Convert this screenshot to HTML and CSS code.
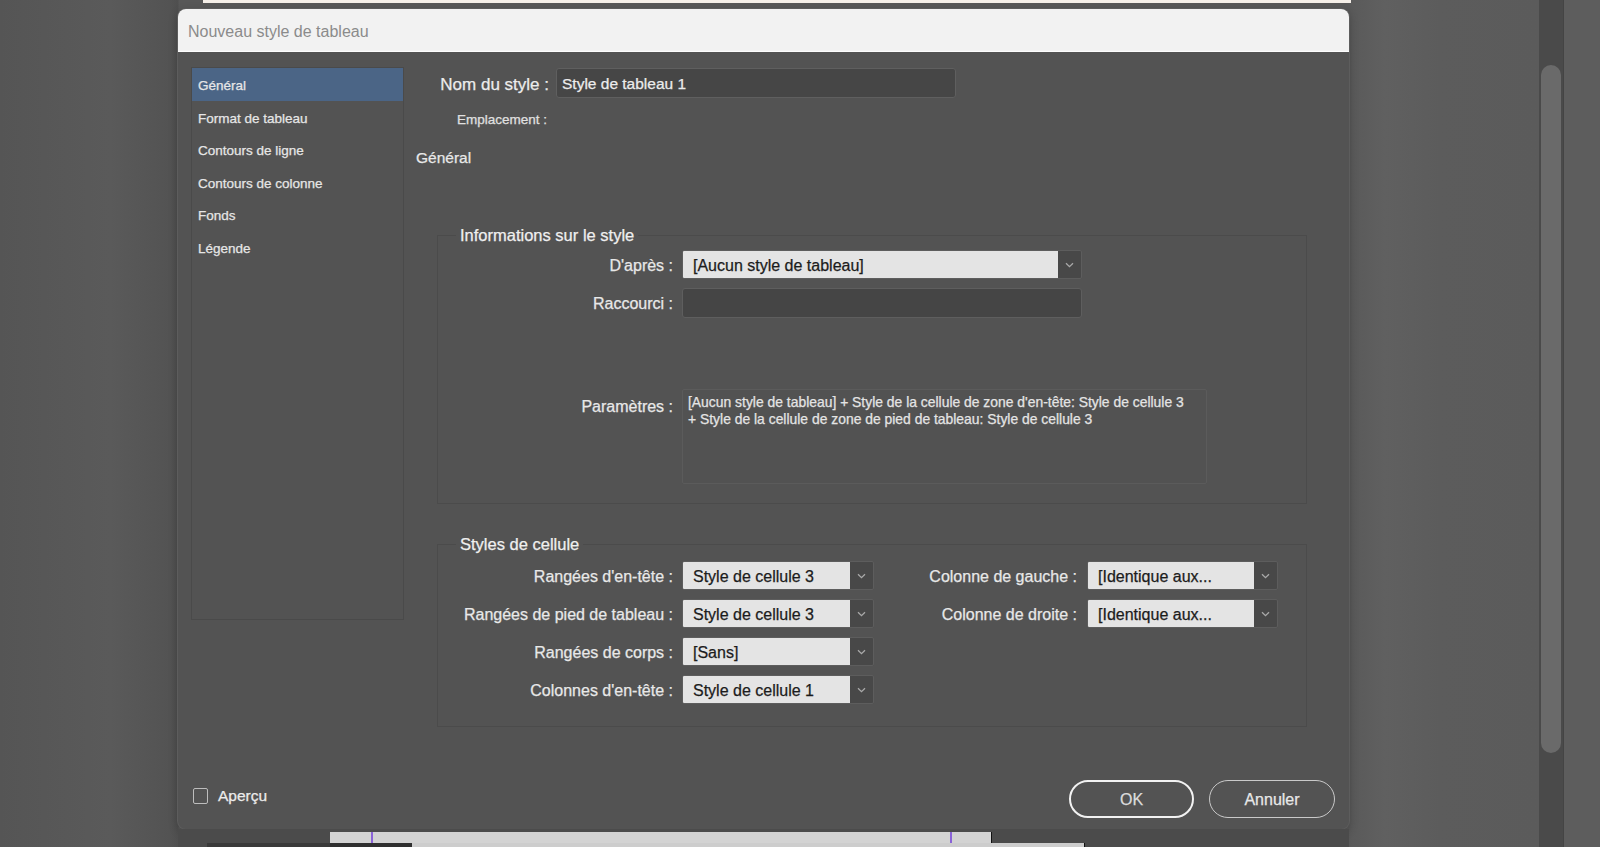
FILE: index.html
```html
<!DOCTYPE html>
<html lang="fr">
<head>
<meta charset="utf-8">
<title>Nouveau style de tableau</title>
<link rel="stylesheet" href="styles.css">
</head>
<body>
<div class="stage">
  <div class="topstrip"><div class="topbar"></div></div>

  <div class="dialog">
    <div class="titlebar">Nouveau style de tableau</div>
    <div class="dbody">
      <div class="content">
        <ul class="sidebar">
          <li class="active">Général</li>
          <li>Format de tableau</li>
          <li>Contours de ligne</li>
          <li>Contours de colonne</li>
          <li>Fonds</li>
          <li>Légende</li>
        </ul>

        <div class="main">
          <div class="namerow">
            <label>Nom du style :</label>
            <div class="text-input">Style de tableau 1</div>
          </div>
          <div class="emplacement">Emplacement :</div>
          <div class="section-title">Général</div>

          <fieldset class="group g1">
            <legend>Informations sur le style</legend>
            <div class="form-row r1">
              <label>D'après :</label>
              <div class="select wide">
                <div class="val">[Aucun style de tableau]</div>
                <div class="arrow"><svg width="9" height="6" viewBox="0 0 9 6"><path d="M1 1.2l3.5 3.5 3.5-3.5" fill="none" stroke="#a9a9a9" stroke-width="1.3"/></svg></div>
              </div>
            </div>
            <div class="form-row r2">
              <label>Raccourci :</label>
              <div class="field"></div>
            </div>
            <div class="form-row r3">
              <label>Paramètres :</label>
              <div class="params">[Aucun style de tableau] + Style de la cellule de zone d'en-tête: Style de cellule 3<br>+ Style de la cellule de zone de pied de tableau: Style de cellule 3</div>
            </div>
          </fieldset>

          <fieldset class="group g2">
            <legend>Styles de cellule</legend>
            <div class="cells">
              <label class="l1">Rangées d'en-tête :</label>
              <div class="select"><div class="val">Style de cellule 3</div><div class="arrow"><svg width="9" height="6" viewBox="0 0 9 6"><path d="M1 1.2l3.5 3.5 3.5-3.5" fill="none" stroke="#a9a9a9" stroke-width="1.3"/></svg></div></div>
              <label class="l2">Colonne de gauche :</label>
              <div class="select"><div class="val">[Identique aux...</div><div class="arrow"><svg width="9" height="6" viewBox="0 0 9 6"><path d="M1 1.2l3.5 3.5 3.5-3.5" fill="none" stroke="#a9a9a9" stroke-width="1.3"/></svg></div></div>

              <label class="l1">Rangées de pied de tableau :</label>
              <div class="select"><div class="val">Style de cellule 3</div><div class="arrow"><svg width="9" height="6" viewBox="0 0 9 6"><path d="M1 1.2l3.5 3.5 3.5-3.5" fill="none" stroke="#a9a9a9" stroke-width="1.3"/></svg></div></div>
              <label class="l2">Colonne de droite :</label>
              <div class="select"><div class="val">[Identique aux...</div><div class="arrow"><svg width="9" height="6" viewBox="0 0 9 6"><path d="M1 1.2l3.5 3.5 3.5-3.5" fill="none" stroke="#a9a9a9" stroke-width="1.3"/></svg></div></div>

              <label class="l1">Rangées de corps :</label>
              <div class="select"><div class="val">[Sans]</div><div class="arrow"><svg width="9" height="6" viewBox="0 0 9 6"><path d="M1 1.2l3.5 3.5 3.5-3.5" fill="none" stroke="#a9a9a9" stroke-width="1.3"/></svg></div></div>
              <span></span><span></span>

              <label class="l1">Colonnes d'en-tête :</label>
              <div class="select"><div class="val">Style de cellule 1</div><div class="arrow"><svg width="9" height="6" viewBox="0 0 9 6"><path d="M1 1.2l3.5 3.5 3.5-3.5" fill="none" stroke="#a9a9a9" stroke-width="1.3"/></svg></div></div>
              <span></span><span></span>
            </div>
          </fieldset>
        </div>
      </div>

      <div class="footer">
        <div class="check"><span class="box"></span><span>Aperçu</span></div>
        <div class="buttons">
          <div class="btn ok">OK</div>
          <div class="btn cancel">Annuler</div>
        </div>
      </div>
    </div>
  </div>

  <div class="bottomstrip">
    <div class="bs-row1">
      <div class="lightbar"><span class="sp1"></span><span class="mark"></span><span class="fill"></span><span class="mark"></span><span class="sp2"></span></div>
      <div class="blackline"></div>
    </div>
    <div class="bs-row2">
      <div class="darkseg"></div>
      <div class="lightseg"></div>
      <div class="blackline"></div>
    </div>
  </div>
</div>

<div class="scroll"><div class="thumb"></div></div>
<div class="edge"></div>
<div class="rest"></div>
</body>
</html>
```

FILE: styles.css
```css
* { box-sizing: border-box; }
html, body { margin: 0; }
body {
  width: 1600px;
  height: 847px;
  overflow: hidden;
  display: flex;
  background: #585858;
  font-family: "Liberation Sans", Arial, sans-serif;
  color: #e4e4e4;
}

.stage {
  width: 1539px;
  flex: none;
  display: flex;
  flex-direction: column;
  background: linear-gradient(90deg, #555 0, #5a5a5a 110px, #535353 170px, #4f4f4f 178px, #585858 179px, #585858 1349px, #5a5a5a 1352px, #606060 1385px, #5c5c5c 1440px, #5b5b5b 100%);
}

.topstrip { height: 9px; flex: none; }
.topbar { margin-left: 203px; width: 1148px; height: 3px; background: #f5efe8; }

.dialog {
  margin-left: 178px;
  width: 1171px;
  height: 820px;
  flex: none;
  border-radius: 8px;
  background: #535353;
  display: flex;
  flex-direction: column;
  overflow: hidden;
  box-shadow: 0 0 0 1px #5d5d5d, 0 3px 10px rgba(0,0,0,0.25);
}

.titlebar {
  height: 43px;
  flex: none;
  background: #f2f2f2;
  border-bottom: 1px solid #fdfdfd;
  padding: 3px 0 0 10px;
  line-height: 40px;
  font-size: 16px;
  color: #8b8b8b;
}

.dbody {
  flex: 1;
  display: flex;
  flex-direction: column;
  -webkit-text-stroke: 0.25px currentColor;
}
.content { flex: 1; display: flex; }

.sidebar {
  list-style: none;
  margin: 15px 0 0 13px;
  padding: 0;
  width: 213px;
  height: 553px;
  flex: none;
  border: 1px solid #4a4a4a;
}
.sidebar li {
  height: 32.6px;
  line-height: 35px;
  padding-left: 6px;
  font-size: 13.5px;
  color: #e6e6e6;
}
.sidebar li.active { background: #4b6586; }

.main { flex: 1; padding-top: 16px; display: flex; flex-direction: column; }

.namerow { display: flex; align-items: center; gap: 7px; height: 30px; }
.namerow label { width: 145px; text-align: right; font-size: 17px; line-height: 20px; padding-top: 3px; color: #ececec; }
.text-input {
  width: 400px;
  height: 30px;
  background: #464646;
  border: 1px solid #5f5f5f;
  border-radius: 3px;
  padding: 2px 0 0 5px;
  font-size: 15.5px;
  line-height: 26px;
  color: #ececec;
}

.emplacement { margin-top: 13px; width: 143px; text-align: right; font-size: 13.5px; line-height: 18px; color: #e0e0e0; }
.section-title { margin-top: 19px; padding-left: 12px; font-size: 15.5px; line-height: 20px; color: #e8e8e8; }

.group {
  margin: 0 0 0 33px;
  width: 870px;
  min-width: 0;
  border: 1px solid #4b4b4b;
  padding: 0;
}
.group legend {
  margin-left: 18px;
  padding: 0 4px;
  font-size: 16.5px;
  line-height: 20px;
  color: #efefef;
}
.g1 { margin-top: 57px; padding-bottom: 19px; }
.g2 { margin-top: 30px; padding-bottom: 22px; }

.form-row { display: grid; grid-template-columns: 244px auto; align-items: center; }
.form-row label { padding: 2px 9px 0 0; text-align: right; font-size: 16px; color: #e8e8e8; }
.r1 { margin-top: 5px; height: 29px; }
.r2 { margin-top: 9px; height: 30px; }
.r3 { margin-top: 71px; align-items: start; }
.r3 label { padding-top: 8px; line-height: 20px; }

.select {
  display: flex;
  height: 29px;
  border: 1px solid #5d5d5d;
  border-radius: 2px;
  background: #484848;
  overflow: hidden;
}
.select.wide { width: 400px; }
.select .val {
  flex: 1;
  background: #e4e4e4;
  color: #1c1c1c;
  padding: 2px 0 0 10px;
  font-size: 16px;
  line-height: 25px;
  white-space: nowrap;
  overflow: hidden;
}
.select .arrow { width: 23px; flex: none; display: flex; align-items: center; justify-content: center; }

.field {
  width: 400px;
  height: 30px;
  background: #454545;
  border: 1px solid #5e5e5e;
  border-radius: 3px;
}

.params {
  width: 525px;
  height: 95px;
  border: 1px solid #5b5b5b;
  border-radius: 2px;
  background: #525252;
  padding: 4px 0 0 5px;
  font-size: 13.9px;
  line-height: 17px;
  color: #e4e4e4;
  white-space: nowrap;
}

.cells {
  margin-top: 7px;
  display: grid;
  grid-template-columns: 244px 192px 213px 191px;
  grid-auto-rows: 29px;
  row-gap: 9px;
  align-items: center;
}
.cells label { text-align: right; font-size: 16px; padding-top: 2px; color: #e8e8e8; white-space: nowrap; }
.cells .l1 { padding-right: 9px; }
.cells .l2 { padding-right: 10px; }

.footer {
  height: 49px;
  flex: none;
  display: flex;
  align-items: flex-start;
  padding: 0 14px 0 15px;
}
.check { display: flex; align-items: center; gap: 10px; margin-top: 8px; height: 16px; font-size: 15.5px; color: #ececec; }
.check .box { width: 15px; height: 16px; border: 1.5px solid #bdbdbd; border-radius: 2px; }
.buttons { margin-left: auto; display: flex; gap: 15px; }
.btn {
  width: 125px;
  height: 38px;
  border-radius: 19px;
  display: flex;
  align-items: center;
  justify-content: center;
  padding-top: 2px;
  font-size: 16px;
  color: #e8e8e8;
}
.btn.ok { border: 2px solid #f2f2f2; color: #dcdcdc; }
.btn.cancel { width: 126px; border: 1.5px solid #c9c9c9; }

.bottomstrip {
  height: 18px;
  flex: none;
  display: flex;
  flex-direction: column;
  justify-content: flex-end;
  background: linear-gradient(90deg, transparent 0 178px, #4b4b4b 178px 1349px, transparent 1349px);
}
.bs-row1 { height: 11px; display: flex; padding-left: 330px; }
.lightbar { width: 661px; display: flex; background: #d3d3d3; }
.lightbar .sp1 { width: 41px; }
.lightbar .fill { flex: 1; }
.lightbar .sp2 { width: 39px; }
.lightbar .mark { width: 2px; background: #8a63d8; }
.blackline { width: 1px; background: #111; }
.bs-row2 { height: 4px; display: flex; padding-left: 207px; }
.darkseg { width: 123px; background: #3a3a3a; }
.lightseg { width: 754px; background: linear-gradient(90deg, #2f2f2f 0 82px, #cdcdcd 82px); }

.scroll { width: 24px; flex: none; background: #4a4a4a; padding: 65px 2px 0; }
.thumb { height: 688px; border-radius: 10px; background: #6a6a6a; }
.edge { width: 1px; flex: none; background: #444; }
.rest { flex: 1; background: #5d5d5d; }
```
